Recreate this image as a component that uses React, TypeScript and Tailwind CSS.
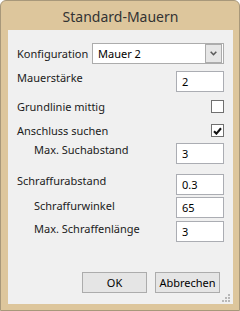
import React from 'react';

const font = { fontFamily: '"Noto Sans", "Open Sans", sans-serif' };

const TextBox: React.FC<{ value: string }> = ({ value }) => (
  <div className="w-[48px] h-[21px] bg-white border border-[#abadb3] pl-[5px] flex items-center text-[11px] text-black leading-none">
    {value}
  </div>
);

const CheckBox: React.FC<{ checked?: boolean }> = ({ checked }) => (
  <div className="w-[13px] h-[13px] bg-white border border-[#707070] flex items-center justify-center">
    {checked && (
      <svg width="9" height="8" viewBox="0 0 9 8">
        <path d="M1 4.2 L3.4 6.6 L8 1.2" fill="none" stroke="#111111" strokeWidth="2.1" />
      </svg>
    )}
  </div>
);

const Row: React.FC<{ label: string; indent?: boolean; lift?: string; children: React.ReactNode; className?: string }> = ({
  label,
  indent,
  lift = '',
  children,
  className = '',
}) => (
  <div className={`flex items-center justify-between ${className}`}>
    <span className={`${indent ? 'pl-[26px]' : 'pl-[9px]'} ${lift} leading-none text-[11px] text-[#1b1b1b]`}>{label}</span>
    {children}
  </div>
);

const SizeGrip = () => (
  <svg width="9" height="9" viewBox="0 0 9 9" className="block">
    <rect x="6" y="0" width="2" height="2" fill="#b8b8b8" />
    <rect x="3" y="3" width="2" height="2" fill="#b8b8b8" />
    <rect x="6" y="3" width="2" height="2" fill="#b8b8b8" />
    <rect x="0" y="6" width="2" height="2" fill="#b8b8b8" />
    <rect x="3" y="6" width="2" height="2" fill="#b8b8b8" />
    <rect x="6" y="6" width="2" height="2" fill="#b8b8b8" />
  </svg>
);

export default function App() {
  return (
    <div style={font} className="w-[240px] h-[311px] bg-[#ddc69c] border border-[#a8987a] rounded-t-[6px] flex flex-col pl-[7px] pr-[6px] pb-[6px]">
      <div className="h-[29px] flex items-center justify-center text-[14px] text-[#333333] pt-[1px]">Standard-Mauern</div>
      <div className="flex-1 bg-[#f0f0f0] flex flex-col pt-[13px] pr-[9px] relative">
        <Row label="Konfiguration">
          <div className="w-[132px] h-[21px] bg-white border border-[#acacac] flex items-center justify-between pl-[5px] pr-[1px] text-[11px] text-black leading-none">
            <span>Mauer 2</span>
            <div className="w-[17px] h-[19px] bg-[#e6e6e6] border border-[#acacac] flex items-center justify-center">
              <svg width="7" height="5" viewBox="0 0 7 5">
                <path d="M0.7 0.7 L3.5 3.7 L6.3 0.7" fill="none" stroke="#5a5a5a" strokeWidth="1.6" />
              </svg>
            </div>
          </div>
        </Row>
        <Row label="Mauerstärke" lift="mb-[8px]" className="mt-[7px]">
          <TextBox value="2" />
        </Row>
        <Row label="Grundlinie mittig" className="mt-[8px]">
          <CheckBox />
        </Row>
        <Row label="Anschluss suchen" className="mt-[11px]">
          <CheckBox checked />
        </Row>
        <Row label="Max. Suchabstand" indent lift="mb-[9px]" className="mt-[6px]">
          <TextBox value="3" />
        </Row>
        <Row label="Schraffurabstand" lift="mb-[9px]" className="mt-[10px]">
          <TextBox value="0.3" />
        </Row>
        <Row label="Schraffurwinkel" indent lift="mb-[4px]" className="mt-[2px]">
          <TextBox value="65" />
        </Row>
        <Row label="Max. Schraffenlänge" indent lift="mb-[6px]" className="mt-[3px]">
          <TextBox value="3" />
        </Row>
        <div className="flex justify-end gap-[8px] mt-[30px] pr-[4px]">
          <button className="w-[65px] h-[21px] bg-[#e5e5e5] border border-[#acacac] text-[11px] text-black leading-none">OK</button>
          <button className="w-[65px] h-[21px] bg-[#e5e5e5] border border-[#acacac] text-[11px] text-black leading-none">Abbrechen</button>
        </div>
        <div className="absolute right-[2px] bottom-[1px]">
          <SizeGrip />
        </div>
      </div>
    </div>
  );
}
